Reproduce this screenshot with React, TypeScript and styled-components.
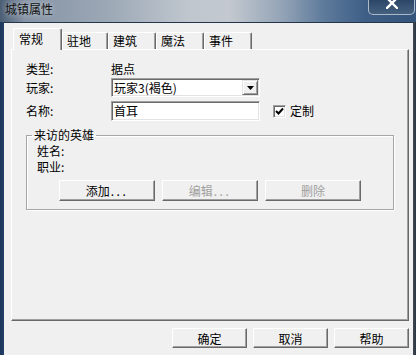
import React from 'react'
import styled, { createGlobalStyle } from 'styled-components'

/**
 * Global
 */

const GlobalStyle = createGlobalStyle`
	html, body {
		margin: 0;
		padding: 0;
		background: #1f3a5c;
	}
	body {
		font-family: 'Noto Sans CJK SC', 'Liberation Sans', sans-serif;
		font-size: 12px;
		color: #000;
	}
`

/**
 * Window frame
 */

const Window = styled.div`
	width: 416px;
	height: 355px;
	display: flex;
	flex-direction: column;
	overflow: hidden;
	background: linear-gradient(90deg, #1c355a 0, #22406a 4px, #56606c 410px, #2b3440 416px);
`

const TitleBar = styled.div`
	height: 22px;
	flex: none;
	display: flex;
	align-items: flex-start;
	justify-content: space-between;
	padding-left: 5px;
	background: linear-gradient(
		90deg,
		#4a5d74 0%,
		#8593a5 6%,
		#9ba7b5 25%,
		#bfc6ce 45%,
		#c3c9cf 55%,
		#93a3b6 68%,
		#5d7a9b 78%,
		#3e5e86 88%,
		#34547b 100%
	);
`

const Title = styled.span`
	font-size: 12px;
	line-height: 18px;
	color: #111;
	text-shadow: 0 0 6px rgba(255, 255, 255, 0.7);
`

const CloseButton = styled.div`
	width: 47px;
	height: 15px;
	margin-right: 1px;
	box-sizing: border-box;
	border: 1px solid rgba(225, 232, 240, 0.7);
	border-top: none;
	border-radius: 0 0 5px 5px;
	background: linear-gradient(#2c4668, #46617f);
	display: flex;
	justify-content: center;
	align-items: flex-start;
`

const Client = styled.div`
	flex: 1;
	margin: 0 3px 0 4px;
	padding: 5px 4px 0 7px;
	background: #f0f0f0;
	border-top: 1px solid #24364c;
	display: flex;
	flex-direction: column;
`

/**
 * Tabs
 */

const TabRow = styled.div`
	height: 21px;
	display: flex;
	align-items: flex-end;
	padding-left: 2px;
	position: relative;
	z-index: 1;
`

const Tab = styled.div<{ $active?: boolean; $w: number }>`
	width: ${(p) => p.$w}px;
	height: ${(p) => (p.$active ? 22 : 17)}px;
	margin-bottom: ${(p) => (p.$active ? -1 : 0)}px;
	box-sizing: border-box;
	background: #f0f0f0;
	border-top: 1px solid #fff;
	border-left: 1px solid #fff;
	border-right: 1px solid #696969;
	box-shadow: inset -1px 0 0 #a0a0a0;
	border-radius: 2px 2px 0 0;
	padding: ${(p) => (p.$active ? '2px 0 0 5px' : '0 0 0 4px')};
	line-height: 16px;
	white-space: nowrap;
`

const Panel = styled.div`
	height: 272px;
	box-sizing: border-box;
	border-top: 1px solid #fff;
	border-left: 1px solid #fff;
	border-right: 1px solid #696969;
	border-bottom: 1px solid #696969;
	box-shadow: inset -1px -1px 0 #a0a0a0;
	padding: 11px 0 0 14px;
`

/**
 * Fields
 */

const Row = styled.div<{ $top?: number }>`
	display: flex;
	align-items: center;
	margin-top: ${(p) => p.$top ?? 0}px;
	line-height: 16px;
`

const Label = styled.span`
	width: 85px;
	flex: none;
`

const sunken = `
	box-sizing: border-box;
	border-top: 1px solid #a0a0a0;
	border-left: 1px solid #a0a0a0;
	border-bottom: 1px solid #fff;
	border-right: 1px solid #fff;
	box-shadow: inset 1px 1px 0 #696969, inset -1px -1px 0 #e3e3e3;
`

const Combo = styled.div`
	${sunken}
	width: 149px;
	height: 19px;
	background: #fff;
	display: flex;
	align-items: center;
	padding: 1px 1px 1px 2px;
`

const ComboText = styled.span`
	flex: 1;
	line-height: 15px;
`

const DropButton = styled.div`
	width: 16px;
	height: 15px;
	box-sizing: border-box;
	background: #f0f0f0;
	border-top: 1px solid #e3e3e3;
	border-left: 1px solid #e3e3e3;
	border-right: 1px solid #696969;
	border-bottom: 1px solid #696969;
	box-shadow: inset 1px 1px 0 #fff, inset -1px -1px 0 #a0a0a0;
	display: flex;
	align-items: center;
	justify-content: center;
`

const TextBox = styled.div`
	${sunken}
	width: 149px;
	height: 20px;
	background: #fff;
	padding-left: 2px;
	line-height: 18px;
`

const CheckWrap = styled.label`
	display: flex;
	align-items: center;
	gap: 4px;
	margin-left: 13px;
`

const CheckBox = styled.span`
	${sunken}
	width: 13px;
	height: 13px;
	background: #fff;
	display: flex;
	align-items: center;
	justify-content: center;
`

/**
 * Group box
 */

const Group = styled.fieldset`
	width: 368px;
	box-sizing: border-box;
	min-width: 0;
	margin: 7px 0 0 0;
	padding: 1px 0 8px 10px;
	border: 1px solid #a6a6a6;
	box-shadow: inset 1px 1px 0 #fff, 1px 1px 0 #fff;
`

const Legend = styled.legend`
	padding: 0 2px;
	margin-left: -5px;
	line-height: 14px;
`

const ButtonRow = styled.div<{ $gap: number }>`
	display: flex;
	gap: ${(p) => p.$gap}px;
`

const Button = styled.div<{ $w: number; $h: number; $disabled?: boolean }>`
	width: ${(p) => p.$w}px;
	height: ${(p) => p.$h}px;
	box-sizing: border-box;
	background: #f0f0f0;
	border-top: 1px solid #fff;
	border-left: 1px solid #fff;
	border-right: 1px solid #696969;
	border-bottom: 1px solid #696969;
	box-shadow: inset -1px -1px 0 #a0a0a0;
	display: flex;
	align-items: center;
	justify-content: center;
	color: ${(p) => (p.$disabled ? '#a0a0a0' : '#000')};
`

const Dots = styled.span`
	letter-spacing: 2.5px;
	margin-left: 1px;
`

const GroupButtons = styled(ButtonRow)`
	margin: 5px 0 0 22px;
`

const Footer = styled(ButtonRow)`
	justify-content: flex-end;
	margin-top: 7px;
`

const tabs = [
	{ label: '常规', w: 49 },
	{ label: '驻地', w: 46 },
	{ label: '建筑', w: 48 },
	{ label: '魔法', w: 48 },
	{ label: '事件', w: 48 },
]

export default function App() {
	return (
		<>
			<GlobalStyle />
			<Window>
				<TitleBar>
					<Title>城镇属性</Title>
					<CloseButton>
						<svg width="12" height="9" viewBox="0 0 12 9">
							<path
								d="M1 -2 L11 8 M11 -2 L1 8"
								stroke="#fff"
								strokeWidth="2.4"
								strokeLinecap="square"
							/>
						</svg>
					</CloseButton>
				</TitleBar>
				<Client>
					<TabRow>
						{tabs.map((t, i) => (
							<Tab key={t.label} $w={t.w} $active={i === 0}>
								{t.label}
							</Tab>
						))}
					</TabRow>
					<Panel>
						<Row>
							<Label>类型:</Label>
							<span>据点</span>
						</Row>
						<Row $top={1}>
							<Label>玩家:</Label>
							<Combo>
								<ComboText>玩家3(褐色)</ComboText>
								<DropButton>
									<svg width="7" height="4" viewBox="0 0 7 4">
										<path d="M0 0 H7 L3.5 4 Z" fill="#000" />
									</svg>
								</DropButton>
							</Combo>
						</Row>
						<Row $top={4}>
							<Label>名称:</Label>
							<TextBox>首耳</TextBox>
							<CheckWrap>
								<CheckBox>
									<svg width="9" height="9" viewBox="0 0 9 9">
										<path
											d="M1 4 L3.5 6.5 L8 1.5"
											stroke="#000"
											strokeWidth="2"
											fill="none"
										/>
									</svg>
								</CheckBox>
								定制
							</CheckWrap>
						</Row>
						<Group>
							<Legend>来访的英雄</Legend>
							<Row>姓名:</Row>
							<Row>职业:</Row>
							<GroupButtons $gap={7}>
								<Button $w={96} $h={21}>
									添加<Dots>...</Dots>
								</Button>
								<Button $w={96} $h={21} $disabled>
									编辑<Dots>...</Dots>
								</Button>
								<Button $w={96} $h={21} $disabled>
									删除
								</Button>
							</GroupButtons>
						</Group>
					</Panel>
					<Footer $gap={6}>
						<Button $w={75} $h={20}>确定</Button>
						<Button $w={75} $h={20}>取消</Button>
						<Button $w={75} $h={20}>帮助</Button>
					</Footer>
				</Client>
			</Window>
		</>
	)
}
